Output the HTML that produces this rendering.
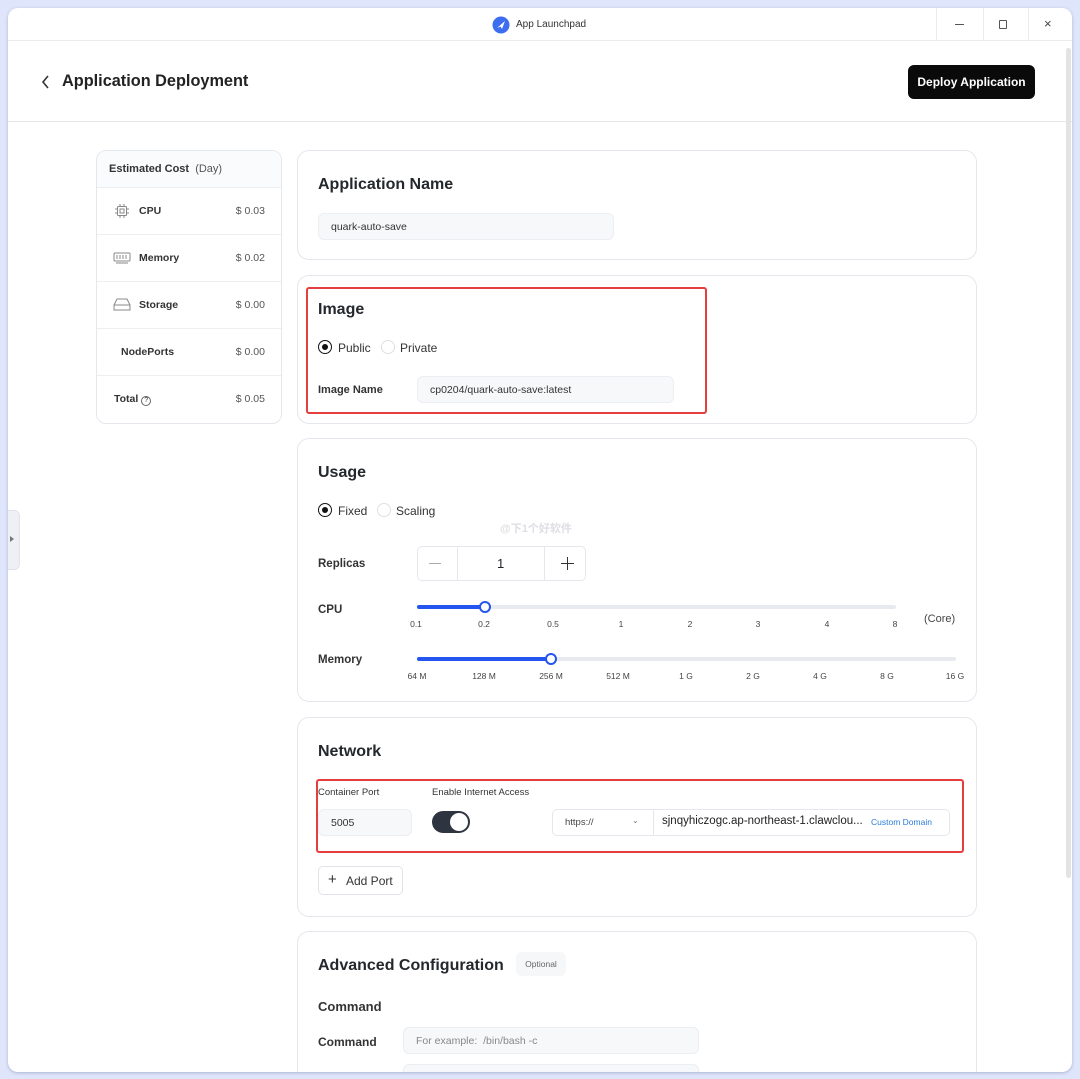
<!DOCTYPE html>
<html><head><meta charset="utf-8"><style>
*{box-sizing:border-box;margin:0;padding:0}
body{width:1080px;height:1079px;background:#dfe5fa;font-family:"Liberation Sans","Noto Sans CJK SC",sans-serif;color:#1f2329;position:relative;overflow:hidden}
.a{position:absolute}
#win{left:8px;top:8px;width:1064px;height:1064px;background:#fff;border-radius:10px;overflow:hidden;box-shadow:0 1px 3px rgba(80,90,140,.35)}
.card{position:absolute;border:1px solid #e4e7ec;border-radius:12px;background:#fff}
.t{position:absolute;white-space:nowrap}
.h{font-size:16px;font-weight:600;color:#24282c}
.lb{font-size:12px;font-weight:600;color:#333}
.inp{position:absolute;background:#f7f8fa;border:1px solid #eceef1;border-radius:6px;font-size:10.5px;color:#333;padding-left:12px;display:flex;align-items:center}
.radio{position:absolute;width:14px;height:14px;border-radius:50%;border:1px solid #dcdfe4;background:#fff}
.radio.on{border:1.5px solid #111}
.radio.on::after{content:"";position:absolute;left:2.5px;top:2.5px;width:6px;height:6px;border-radius:50%;background:#111}
.sm{font-size:12px;color:#333}
.tick{position:absolute;font-size:8.5px;color:#444;transform:translateX(-50%)}
.row{position:absolute;left:0;width:185px;height:47px;border-top:1px solid #eceef1}
</style></head><body>
<div id="win" class="a">
  <div class="a" style="left:0;top:32px;width:1064px;height:1px;background:#ececec"></div>
  <svg class="a" style="left:484px;top:8px" width="18" height="18" viewBox="0 0 18 18"><circle cx="9" cy="9" r="8.5" fill="#3d6ef0"/><path d="M5 12 L13 5 L10 13 L8.5 10.5Z" fill="#fff"/></svg>
  <div class="t" style="left:508px;top:11px;font-size:10px;color:#333">App Launchpad</div>
  <div class="a" style="left:928px;top:0;width:1px;height:32px;background:#ececec"></div>
  <div class="a" style="left:975px;top:0;width:1px;height:32px;background:#ececec"></div>
  <div class="a" style="left:1020px;top:0;width:1px;height:32px;background:#ececec"></div>
  <div class="a" style="left:947px;top:16px;width:9px;height:1px;background:#555"></div>
  <div class="a" style="left:991px;top:12px;width:8px;height:9px;border:1px solid #555;border-radius:1px"></div>
  <div class="t" style="left:1036px;top:8px;font-size:13px;color:#444">×</div>
  <svg class="a" style="left:33px;top:67px" width="10" height="14" viewBox="0 0 10 14"><path d="M7 1 L2 7 L7 13" stroke="#333" stroke-width="1.6" fill="none"/></svg>
  <div class="t" style="left:54px;top:64px;font-size:16.3px;font-weight:600;color:#222">Application Deployment</div>
  <div class="a" style="left:900px;top:57px;width:127px;height:34px;background:#0a0a0a;border-radius:6px;color:#fff;font-size:12px;font-weight:700;display:flex;align-items:center;justify-content:center">Deploy Application</div>
  <div class="a" style="left:0;top:113px;width:1064px;height:1px;background:#e6e6e6"></div>
  <div class="a" style="left:1058px;top:40px;width:5px;height:830px;background:#e3e3e3;border-radius:3px"></div>
  <div class="a" style="left:-6px;top:502px;width:18px;height:60px;background:#eef0f5;border-radius:6px;border:1px solid #e0e3ea"></div>
  <div class="a" style="left:2px;top:528px;width:0;height:0;border-left:4px solid #777;border-top:3px solid transparent;border-bottom:3px solid transparent"></div>

  <div class="card" style="left:88px;top:142px;width:186px;height:274px;border-radius:10px;overflow:hidden">
    <div class="a" style="left:0;top:0;width:186px;height:36px;background:#fafbfc"></div>
    <div class="t" style="left:12px;top:12px;font-size:11px;font-weight:600;color:#333">Estimated Cost <span style="font-weight:400;color:#555">&nbsp;(Day)</span></div>
    <div class="row" style="top:36px">
      <svg class="a" style="left:18px;top:16px" width="14" height="14" viewBox="0 0 14 14" fill="none" stroke="#888" stroke-width="1"><rect x="2.5" y="2.5" width="9" height="9" rx="1"/><rect x="5" y="5" width="4" height="4"/><path d="M5 0v2M9 0v2M5 12v2M9 12v2M0 5h2M0 9h2M12 5h2M12 9h2"/></svg>
      <div class="t lb" style="left:42px;top:17px;font-size:10.5px">CPU</div><div class="t" style="right:17px;top:17px;font-size:10.5px;color:#555">$ 0.03</div></div>
    <div class="row" style="top:83px">
      <svg class="a" style="left:16px;top:17px" width="18" height="12" viewBox="0 0 18 12" fill="none" stroke="#888" stroke-width="1"><rect x="1" y="1" width="16" height="8" rx="1"/><path d="M4 3v4M7 3v4M10 3v4M13 3v4M3 11h12"/></svg>
      <div class="t lb" style="left:42px;top:17px;font-size:10.5px">Memory</div><div class="t" style="right:17px;top:17px;font-size:10.5px;color:#555">$ 0.02</div></div>
    <div class="row" style="top:130px">
      <svg class="a" style="left:16px;top:16px" width="18" height="14" viewBox="0 0 18 14" fill="none" stroke="#888" stroke-width="1"><path d="M1 7 L4 1 H14 L17 7 V12 H1Z M1 7H17"/></svg>
      <div class="t lb" style="left:42px;top:17px;font-size:10.5px">Storage</div><div class="t" style="right:17px;top:17px;font-size:10.5px;color:#555">$ 0.00</div></div>
    <div class="row" style="top:177px">
      <div class="t lb" style="left:24px;top:17px;font-size:10.5px">NodePorts</div><div class="t" style="right:17px;top:17px;font-size:10.5px;color:#555">$ 0.00</div></div>
    <div class="row" style="top:224px">
      <div class="t lb" style="left:17px;top:17px;font-size:10.5px">Total <span style="display:inline-block;width:10px;height:10px;border:1px solid #666;border-radius:50%;font-size:7px;text-align:center;line-height:8px;font-weight:400">?</span></div><div class="t" style="right:17px;top:17px;font-size:10.5px;color:#555">$ 0.05</div></div>
  </div>

  <div class="card" style="left:289px;top:142px;width:680px;height:110px"></div>
  <div class="t h" style="left:310px;top:168px">Application Name</div>
  <div class="inp" style="left:310px;top:205px;width:296px;height:27px">quark-auto-save</div>

  <div class="card" style="left:289px;top:267px;width:680px;height:149px"></div>
  <div class="a" style="left:298px;top:279px;width:401px;height:127px;border:2px solid #e53e3e;border-radius:3px"></div>
  <div class="t h" style="left:310px;top:293px">Image</div>
  <div class="radio on" style="left:310px;top:332px"></div><div class="t sm" style="left:330px;top:333px">Public</div>
  <div class="radio" style="left:373px;top:332px"></div><div class="t sm" style="left:392px;top:333px">Private</div>
  <div class="t lb" style="left:310px;top:376px;font-size:11px">Image Name</div>
  <div class="inp" style="left:409px;top:368px;width:257px;height:27px">cp0204/quark-auto-save:latest</div>

  <div class="card" style="left:289px;top:430px;width:680px;height:264px"></div>
  <div class="t h" style="left:310px;top:456px">Usage</div>
  <div class="radio on" style="left:310px;top:495px"></div><div class="t sm" style="left:330px;top:496px">Fixed</div>
  <div class="radio" style="left:369px;top:495px"></div><div class="t sm" style="left:388px;top:496px">Scaling</div>
  <div class="t lb" style="left:310px;top:550px;font-size:11.5px">Replicas</div>
  <div class="a" style="left:409px;top:538px;width:169px;height:35px;border:1px solid #e4e7ec;border-radius:5px"></div>
  <div class="a" style="left:449px;top:539px;width:1px;height:33px;background:#e4e7ec"></div>
  <div class="a" style="left:536px;top:539px;width:1px;height:33px;background:#e4e7ec"></div>
  <div class="a" style="left:421px;top:555px;width:12px;height:1px;background:#aaa"></div>
  <div class="t" style="left:489px;top:548px;font-size:13px">1</div>
  <div class="a" style="left:553px;top:555px;width:13px;height:1.4px;background:#333"></div>
  <div class="a" style="left:559px;top:549px;width:1.4px;height:13px;background:#333"></div>
  <div class="t lb" style="left:310px;top:596px;font-size:11.5px">CPU</div>
  <div class="a" style="left:409px;top:597px;width:479px;height:4px;background:#e8eaf0;border-radius:2px"></div>
  <div class="a" style="left:409px;top:597px;width:68px;height:4px;background:#2455f0;border-radius:2px"></div>
  <div class="a" style="left:471px;top:593px;width:12px;height:12px;border-radius:50%;background:#fff;border:2px solid #2455f0"></div>
  <div class="tick" style="left:408px;top:611px">0.1</div><div class="tick" style="left:476px;top:611px">0.2</div><div class="tick" style="left:545px;top:611px">0.5</div><div class="tick" style="left:613px;top:611px">1</div><div class="tick" style="left:682px;top:611px">2</div><div class="tick" style="left:750px;top:611px">3</div><div class="tick" style="left:819px;top:611px">4</div><div class="tick" style="left:887px;top:611px">8</div>
  <div class="t" style="left:916px;top:605px;font-size:11px;color:#444">(Core)</div>
  <div class="t lb" style="left:310px;top:646px;font-size:11.5px">Memory</div>
  <div class="a" style="left:409px;top:649px;width:539px;height:4px;background:#e8eaf0;border-radius:2px"></div>
  <div class="a" style="left:409px;top:649px;width:134px;height:4px;background:#2455f0;border-radius:2px"></div>
  <div class="a" style="left:537px;top:645px;width:12px;height:12px;border-radius:50%;background:#fff;border:2px solid #2455f0"></div>
  <div class="tick" style="left:409px;top:663px">64 M</div><div class="tick" style="left:476px;top:663px">128 M</div><div class="tick" style="left:543px;top:663px">256 M</div><div class="tick" style="left:610px;top:663px">512 M</div><div class="tick" style="left:678px;top:663px">1 G</div><div class="tick" style="left:745px;top:663px">2 G</div><div class="tick" style="left:812px;top:663px">4 G</div><div class="tick" style="left:879px;top:663px">8 G</div><div class="tick" style="left:947px;top:663px">16 G</div>

  <div class="card" style="left:289px;top:709px;width:680px;height:200px"></div>
  <div class="t h" style="left:310px;top:735px">Network</div>
  <div class="a" style="left:308px;top:771px;width:648px;height:74px;border:2px solid #e53e3e;border-radius:3px"></div>
  <div class="t" style="left:310px;top:779px;font-size:9.5px;color:#333">Container Port</div>
  <div class="t" style="left:424px;top:779px;font-size:9.5px;color:#333">Enable Internet Access</div>
  <div class="inp" style="left:310px;top:801px;width:94px;height:27px">5005</div>
  <div class="a" style="left:424px;top:803px;width:38px;height:22px;border-radius:11px;background:#2f3540"></div>
  <div class="a" style="left:442px;top:805px;width:18px;height:18px;border-radius:50%;background:#fff"></div>
  <div class="a" style="left:544px;top:801px;width:398px;height:27px;border:1px solid #e4e7ec;border-radius:5px;background:#fff"></div>
  <div class="a" style="left:645px;top:801px;width:1px;height:27px;background:#e4e7ec"></div>
  <div class="t" style="left:557px;top:809px;font-size:9.5px;color:#444">https://</div>
  <div class="t" style="left:624px;top:808px;font-size:8px;color:#777">⌄</div>
  <div class="t" style="left:654px;top:807px;font-size:11.5px;color:#222">sjnqyhiczogc.ap-northeast-1.clawclou...</div>
  <div class="t" style="left:863px;top:809px;font-size:8.5px;color:#2b7bd8">Custom Domain</div>
  <div class="a" style="left:310px;top:858px;width:85px;height:29px;border:1px solid #e0e3e8;border-radius:5px"></div>
  <div class="t" style="left:320px;top:863px;font-size:15px;color:#333">+</div>
  <div class="t" style="left:338px;top:866px;font-size:12px;color:#333">Add Port</div>

  <div class="card" style="left:289px;top:923px;width:680px;height:200px"></div>
  <div class="t h" style="left:310px;top:949px">Advanced Configuration</div>
  <div class="a" style="left:508px;top:944px;width:50px;height:24px;background:#f6f7f9;border-radius:6px;font-size:8.5px;color:#666;display:flex;align-items:center;justify-content:center">Optional</div>
  <div class="t" style="left:310px;top:991px;font-size:13px;font-weight:600;color:#333">Command</div>
  <div class="t lb" style="left:310px;top:1027px">Command</div>
  <div class="inp" style="left:395px;top:1019px;width:296px;height:27px;color:#888">For example: &nbsp;/bin/bash -c</div>
  <div class="inp" style="left:395px;top:1056px;width:296px;height:27px"></div>
</div>
<div class="t" style="left:500px;top:520px;font-size:11px;color:rgba(200,200,210,.6);font-weight:700">@下1个好软件</div>
</body></html>
